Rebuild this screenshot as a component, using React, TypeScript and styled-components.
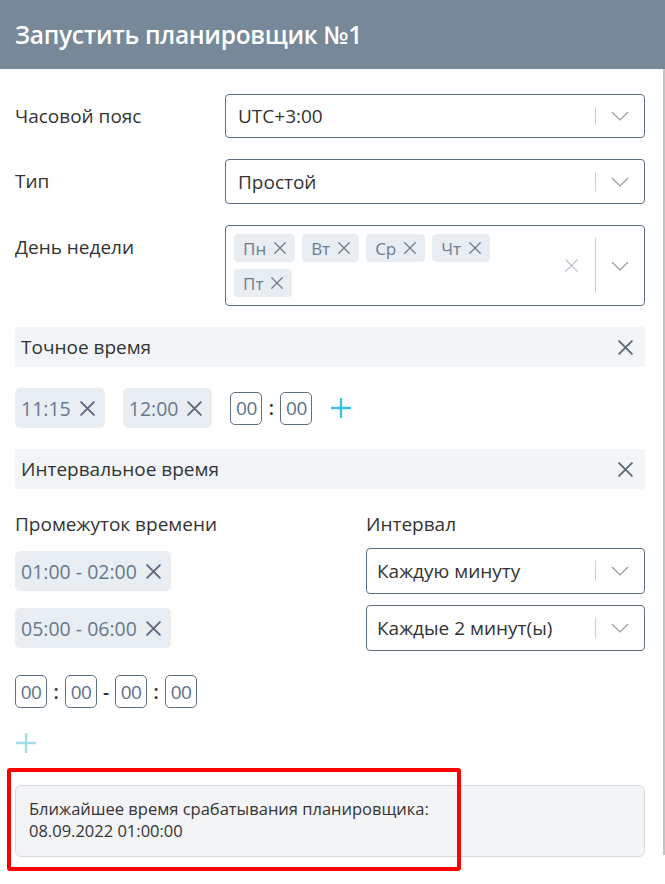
import React from "react";
import styled, { createGlobalStyle } from "styled-components";

const Global = createGlobalStyle`
  html, body { margin: 0; padding: 0; background: #fff; }
  body { font-family: "Open Sans", "Noto Sans", sans-serif; color: #333; }
  * { box-sizing: border-box; }
`;

const Page = styled.div`
  position: relative;
  width: 665px;
  height: 884px;
  overflow: hidden;
  background: #fff;
`;

const Header = styled.div`
  height: 69px;
  background: #778899;
  display: flex;
  align-items: center;
  padding-left: 15px;
  padding-bottom: 1px;
  color: #fff;
  font-size: 24.5px;
  font-weight: 600;
  letter-spacing: -0.3px;
`;

const Scrollbar = styled.div`
  position: absolute;
  right: 0;
  top: 69px;
  width: 2px;
  height: 786px;
  background: #c4c4c4;
`;

const Body = styled.div`
  padding: 25px 20px 0 15px;
  display: flex;
  flex-direction: column;
`;

const FieldRow = styled.div<{ $mt?: number }>`
  display: grid;
  grid-template-columns: 210px 1fr;
  align-items: start;
  margin-top: ${(p) => p.$mt ?? 0}px;
`;

const Label = styled.div<{ $pt?: number }>`
  font-size: 19px;
  color: #333;
  line-height: 26px;
  padding-top: ${(p) => p.$pt ?? 9}px;
`;

const SelectBox = styled.div<{ $h?: number; $pl?: number }>`
  height: ${(p) => p.$h ?? 44}px;
  border: 1px solid #5d6f80;
  border-radius: 4px;
  display: flex;
  align-items: center;
  padding-left: ${(p) => p.$pl ?? 12}px;
  font-size: 19px;
  color: #333;
`;

const SelectValue = styled.div`
  flex: 1;
  white-space: nowrap;
`;

const Indicators = styled.div`
  display: flex;
  align-items: center;
  align-self: stretch;
  padding: 12px 0;
`;

const Sep = styled.div`
  width: 1px;
  align-self: stretch;
  background: #cccccc;
`;

const Chevron = styled.div`
  width: 48px;
  display: flex;
  justify-content: center;
  align-items: center;
  color: #9a9a9a;
`;

const ClearBtn = styled.div`
  width: 48px;
  display: flex;
  justify-content: center;
  align-items: center;
  color: #b6bfc8;
`;

const TagsWrap = styled.div`
  display: flex;
  flex-wrap: wrap;
  align-content: flex-start;
  align-self: flex-start;
  gap: 7px;
  padding-top: 8px;
  width: 300px;
`;

const Spacer = styled.div`
  flex: 1;
`;

const DayTag = styled.div`
  height: 28px;
  border-radius: 4px;
  background: #e8edf2;
  color: #6b7c8d;
  font-size: 17px;
  display: flex;
  align-items: center;
  gap: 7px;
  padding: 0 8px 0 9px;
`;

const Section = styled.div<{ $mt: number }>`
  margin-top: ${(p) => p.$mt}px;
  height: 40px;
  background: #f1f5f8;
  border-radius: 3px;
  display: flex;
  align-items: center;
  justify-content: space-between;
  padding: 0 11px 0 6px;
  font-size: 19px;
  color: #333;
`;

const SectionClose = styled.div`
  color: #5c6b7a;
  display: flex;
`;

const ChipsRow = styled.div<{ $mt: number }>`
  margin-top: ${(p) => p.$mt}px;
  display: flex;
  align-items: center;
`;

const Chip = styled.div<{ $mr?: number }>`
  height: 40px;
  border-radius: 5px;
  background: #e9eef3;
  font-size: 19.5px;
  display: flex;
  align-items: center;
  gap: 8px;
  padding: 0 9px 0 6px;
  margin-right: ${(p) => p.$mr ?? 0}px;
  color: #66798b;
`;

const ChipX = styled.span`
  color: #5a6a7a;
  display: flex;
`;

const TimeBox = styled.div`
  width: 32px;
  height: 33px;
  border: 1px solid #5d6f80;
  border-radius: 5px;
  display: flex;
  align-items: center;
  justify-content: center;
  font-size: 19px;
  letter-spacing: -0.5px;
  color: #5b7188;
`;

const Colon = styled.span`
  width: 18px;
  text-align: center;
  font-size: 19px;
  color: #333;
  font-weight: 600;
`;

const AddBtn = styled.div<{ $disabled?: boolean; $ml?: number }>`
  display: flex;
  margin-left: ${(p) => p.$ml ?? 0}px;
  color: ${(p) => (p.$disabled ? "#a5dde7" : "#3ec1d6")};
`;

const IntervalGrid = styled.div`
  margin-top: 22px;
  display: grid;
  grid-template-columns: 351px 1fr;
  row-gap: 11px;
  align-items: center;
`;

const ColTitle = styled.div`
  font-size: 19px;
  line-height: 26px;
  color: #333;
`;

const ChipCell = styled.div`
  display: flex;
`;

const InputsRow = styled.div`
  margin-top: 24px;
  display: flex;
  align-items: center;
`;

const PlusRow = styled.div`
  margin-top: 24px;
  display: flex;
`;

const InfoBox = styled.div`
  margin-top: 31px;
  border: 1px solid #d6d9dd;
  background: #f3f4f6;
  border-radius: 6px;
  padding: 12px 13px 12px;
  font-size: 16.5px;
  line-height: 22px;
  color: #333;
  height: 72px;
`;

const Highlight = styled.div`
  position: absolute;
  left: 7px;
  top: 768px;
  width: 454px;
  height: 103px;
  border: 4px solid #ff0000;
  border-radius: 3px;
  pointer-events: none;
`;

const XIcon = ({ size = 16, sw = 1.6 }: { size?: number; sw?: number }) => (
  <svg width={size} height={size} viewBox="0 0 16 16" fill="none">
    <path d="M2 2 L14 14 M14 2 L2 14" stroke="currentColor" strokeWidth={sw} strokeLinecap="round" />
  </svg>
);

const ChevronIcon = () => (
  <svg width="18" height="10" viewBox="0 0 18 10" fill="none">
    <path d="M1 1 L9 9 L17 1" stroke="currentColor" strokeWidth="1.2" />
  </svg>
);

const PlusIcon = ({ size = 22 }: { size?: number }) => (
  <svg width={size} height={size} viewBox="0 0 22 22" fill="none">
    <path d="M11 1 V21 M1 11 H21" stroke="currentColor" strokeWidth="2.4" />
  </svg>
);

const Select = ({ value, h, pl }: { value: string; h?: number; pl?: number }) => (
  <SelectBox $h={h} $pl={pl}>
    <SelectValue>{value}</SelectValue>
    <Indicators>
      <Sep />
      <Chevron>
        <ChevronIcon />
      </Chevron>
    </Indicators>
  </SelectBox>
);

const days = ["Пн", "Вт", "Ср", "Чт", "Пт"];

export default function App() {
  return (
    <Page>
      <Global />
      <Header>Запустить планировщик №1</Header>
      <Body>
        <FieldRow>
          <Label>Часовой пояс</Label>
          <Select value="UTC+3:00" h={44} />
        </FieldRow>
        <FieldRow $mt={21}>
          <Label>Тип</Label>
          <Select value="Простой" h={45} />
        </FieldRow>
        <FieldRow $mt={21}>
          <Label>День недели</Label>
          <SelectBox $h={81} $pl={8}>
            <TagsWrap>
              {days.map((d) => (
                <DayTag key={d}>
                  {d}
                  <XIcon size={14} sw={1.5} />
                </DayTag>
              ))}
            </TagsWrap>
            <Spacer />
            <ClearBtn>
              <XIcon size={15} sw={1.4} />
            </ClearBtn>
            <Indicators>
              <Sep />
              <Chevron>
                <ChevronIcon />
              </Chevron>
            </Indicators>
          </SelectBox>
        </FieldRow>

        <Section $mt={21}>
          Точное время
          <SectionClose>
            <XIcon size={17} sw={1.8} />
          </SectionClose>
        </Section>

        <ChipsRow $mt={21}>
          <Chip $mr={18}>
            11:15
            <ChipX>
              <XIcon size={17} sw={1.8} />
            </ChipX>
          </Chip>
          <Chip $mr={18}>
            12:00
            <ChipX>
              <XIcon size={17} sw={1.8} />
            </ChipX>
          </Chip>
          <TimeBox>00</TimeBox>
          <Colon>:</Colon>
          <TimeBox>00</TimeBox>
          <AddBtn $ml={18}>
            <PlusIcon />
          </AddBtn>
        </ChipsRow>

        <Section $mt={21}>
          Интервальное время
          <SectionClose>
            <XIcon size={17} sw={1.8} />
          </SectionClose>
        </Section>

        <IntervalGrid>
          <ColTitle>Промежуток времени</ColTitle>
          <ColTitle>Интервал</ColTitle>
          <ChipCell>
            <Chip>
              01:00 - 02:00
              <ChipX>
                <XIcon size={17} sw={1.8} />
              </ChipX>
            </Chip>
          </ChipCell>
          <Select value="Каждую минуту" h={46} pl={10} />
          <ChipCell>
            <Chip>
              05:00 - 06:00
              <ChipX>
                <XIcon size={17} sw={1.8} />
              </ChipX>
            </Chip>
          </ChipCell>
          <Select value="Каждые 2 минут(ы)" h={46} pl={10} />
        </IntervalGrid>

        <InputsRow>
          <TimeBox>00</TimeBox>
          <Colon>:</Colon>
          <TimeBox>00</TimeBox>
          <Colon>-</Colon>
          <TimeBox>00</TimeBox>
          <Colon>:</Colon>
          <TimeBox>00</TimeBox>
        </InputsRow>

        <PlusRow>
          <AddBtn $disabled>
            <PlusIcon />
          </AddBtn>
        </PlusRow>

        <InfoBox>
          Ближайшее время срабатывания планировщика:
          <br />
          08.09.2022 01:00:00
        </InfoBox>
      </Body>
      <Scrollbar />
      <Highlight />
    </Page>
  );
}
